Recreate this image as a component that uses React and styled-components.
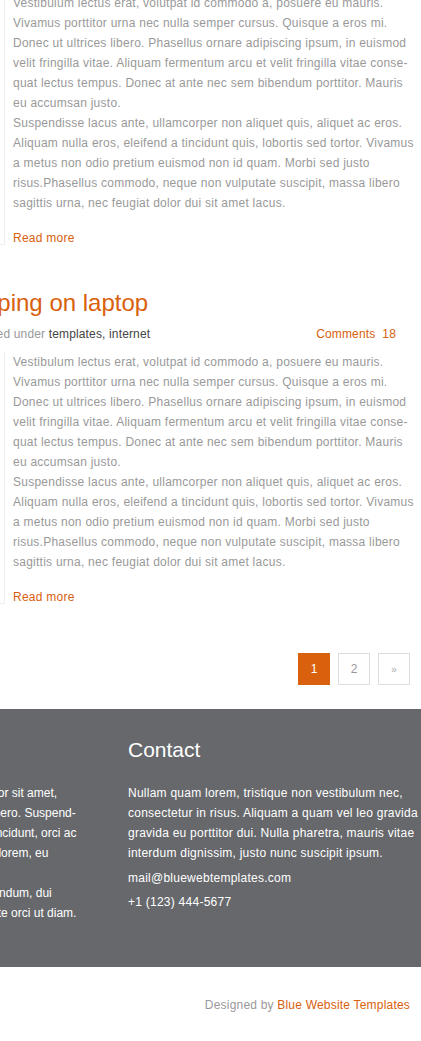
import React from "react";
import styled, { createGlobalStyle } from "styled-components";

const ORANGE = "#d9600c";

const articles = [
  { id: 1, title: "Working in the office", tags: "business, office", comments: 24 },
  { id: 2, title: "Typing on laptop", tags: "templates, internet", comments: 18 },
];

const firstPara =
  "Vestibulum lectus erat, volutpat id commodo a, posuere eu mauris. Vivamus porttitor urna nec nulla semper cursus. Quisque a eros mi. Donec ut ultrices libero. Phasellus ornare adipiscing ipsum, in euismod velit fringilla vitae. Aliquam fermentum arcu et velit fringilla vitae conse\u00ADquat lectus tempus. Donec at ante nec sem bibendum porttitor. Mauris eu accumsan justo.";
const secondPara =
  "Suspendisse lacus ante, ullamcorper non aliquet quis, aliquet ac eros. Aliquam nulla eros, eleifend a tincidunt quis, lobortis sed tortor. Vivamus a metus non odio pretium euismod non id quam. Morbi sed justo risus.Phasellus commodo, neque non vulputate suscipit, massa libero sagittis urna, nec feugiat dolor dui sit amet lacus.";

const GlobalStyle = createGlobalStyle`
  html, body {
    margin: 0;
    padding: 0;
    background: #fff;
    overflow: hidden;
  }
  body {
    font-family: "Liberation Sans", Arial, sans-serif;
    font-size: 12px;
    color: #999;
  }
  a {
    text-decoration: none;
  }
`;

const App = () => {
  return (
    <Frame>
      <GlobalStyle />
      <Canvas>
        <Main>
          {articles.map((post) => (
            <Article key={post.id}>
              <Title>{post.title}</Title>
              <Meta>
                <span>
                  Posted under <Tags>{post.tags}</Tags>
                </span>
                <Comments href="#">
                  Comments<Count>{post.comments}</Count>
                </Comments>
              </Meta>
              <Body>
                <Aside />
                <Text>
                  <Para>{firstPara}</Para>
                  <Para>{secondPara}</Para>
                  <ReadMore href="#">Read more</ReadMore>
                </Text>
              </Body>
            </Article>
          ))}
          <Pagination>
            <PageLink href="#" $active>
              1
            </PageLink>
            <PageLink href="#">2</PageLink>
            <PageLink href="#" $small>
              »
            </PageLink>
          </Pagination>
        </Main>

        <Footer>
          <FooterInner>
            <Column>
              <FooterTitle>About us</FooterTitle>
              <FooterPara $gap>
                Lorem ipsum dolor sit amet,
                <br />
                Donec ultrices libero. Suspend-
                <br />
                isse commodo tincidunt, orci ac
                <br />
                Integer volutpat, lorem, eu
              </FooterPara>
              <FooterPara>
                Sed tempus bibendum, dui
                <br />
                Vestibulum et ante orci ut diam.
              </FooterPara>
            </Column>
            <Column $spaced>
              <FooterTitle>Contact</FooterTitle>
              <FooterPara $small>
                Nullam quam lorem, tristique non vestibulum nec, consectetur in
                risus. Aliquam a quam vel leo gravida gravida eu porttitor dui.
                Nulla pharetra, mauris vitae interdum dignissim, justo nunc
                suscipit ipsum.
              </FooterPara>
              <ContactLine>mail@bluewebtemplates.com</ContactLine>
              <ContactLine>+1 (123) 444-5677</ContactLine>
            </Column>
          </FooterInner>
        </Footer>

        <Credit>
          Designed by <CreditLink href="#">Blue Website Templates</CreditLink>
        </Credit>
      </Canvas>
    </Frame>
  );
};

const Frame = styled.div`
  width: 100%;
  height: 100vh;
  overflow: hidden;
`;

const Canvas = styled.div`
  width: 512px;
  margin: -71px 0 0 -91px;
`;

const Main = styled.main`
  width: 501px;
  padding: 0 0 24px 63px;
  box-sizing: border-box;
`;

const Article = styled.article`
  margin-bottom: 43px;
`;

const Title = styled.h2`
  margin: 0;
  font-size: 24px;
  line-height: 30px;
  font-weight: normal;
  color: ${ORANGE};
  white-space: nowrap;
`;

const Meta = styled.div`
  display: flex;
  justify-content: space-between;
  margin-top: 6px;
  padding-right: 14px;
  line-height: 20px;
  letter-spacing: 0.15px;
  color: #999;
  white-space: nowrap;
`;

const Tags = styled.span`
  color: #444;
`;

const Comments = styled.a`
  color: ${ORANGE};
`;

const Count = styled.span`
  margin-left: 7px;
`;

const Body = styled.div`
  display: flex;
  margin-top: 8px;
`;

const Aside = styled.div`
  flex: 0 0 33px;
  border-right: 1px solid #eee;
  border-bottom: 1px solid #eee;
  box-sizing: border-box;
`;

const Text = styled.div`
  flex: 0 0 405px;
  padding-left: 8px;
  line-height: 20px;
  letter-spacing: 0.25px;
  color: #999;
`;

const Para = styled.p`
  margin: 0;
`;

const ReadMore = styled.a`
  display: block;
  margin-top: 18px;
  line-height: 14px;
  color: ${ORANGE};
`;

const Pagination = styled.nav`
  display: flex;
  justify-content: flex-end;
  gap: 8px;
  padding-top: 6px;
`;

const PageLink = styled.a`
  width: 32px;
  height: 32px;
  box-sizing: border-box;
  display: flex;
  align-items: center;
  justify-content: center;
  border: 1px solid ${(p) => (p.$active ? ORANGE : "#ddd")};
  background: ${(p) => (p.$active ? ORANGE : "#fff")};
  color: ${(p) => (p.$active ? "#fff" : p.$small ? "#aaa" : "#999")};
  font-size: ${(p) => (p.$small ? "10px" : "12px")};
`;

const Footer = styled.footer`
  background: #66686c;
  padding: 28px 0 44px;
`;

const FooterInner = styled.div`
  width: 514px;
  display: grid;
  grid-template-columns: 190px 295px;
  column-gap: 29px;
`;

const Column = styled.div`
  color: #fff;
  letter-spacing: ${(p) => (p.$spaced ? "0.25px" : "0")};
`;

const FooterTitle = styled.h3`
  margin: 0 0 20px;
  font-size: 21px;
  line-height: 26px;
  font-weight: normal;
  letter-spacing: 0;
  color: #fff;
  white-space: nowrap;
`;

const FooterPara = styled.p`
  margin: 0 0 ${(p) => (p.$gap ? "20px" : p.$small ? "3px" : "0")};
  line-height: 20px;
  white-space: ${(p) => (p.$small ? "normal" : "nowrap")};
`;

const ContactLine = styled.p`
  margin: 0;
  line-height: 24px;
`;

const Credit = styled.div`
  width: 501px;
  padding: 28px 0;
  text-align: right;
  line-height: 20px;
  letter-spacing: 0.2px;
  color: #999;
`;

const CreditLink = styled.a`
  color: ${ORANGE};
`;

export default App;
